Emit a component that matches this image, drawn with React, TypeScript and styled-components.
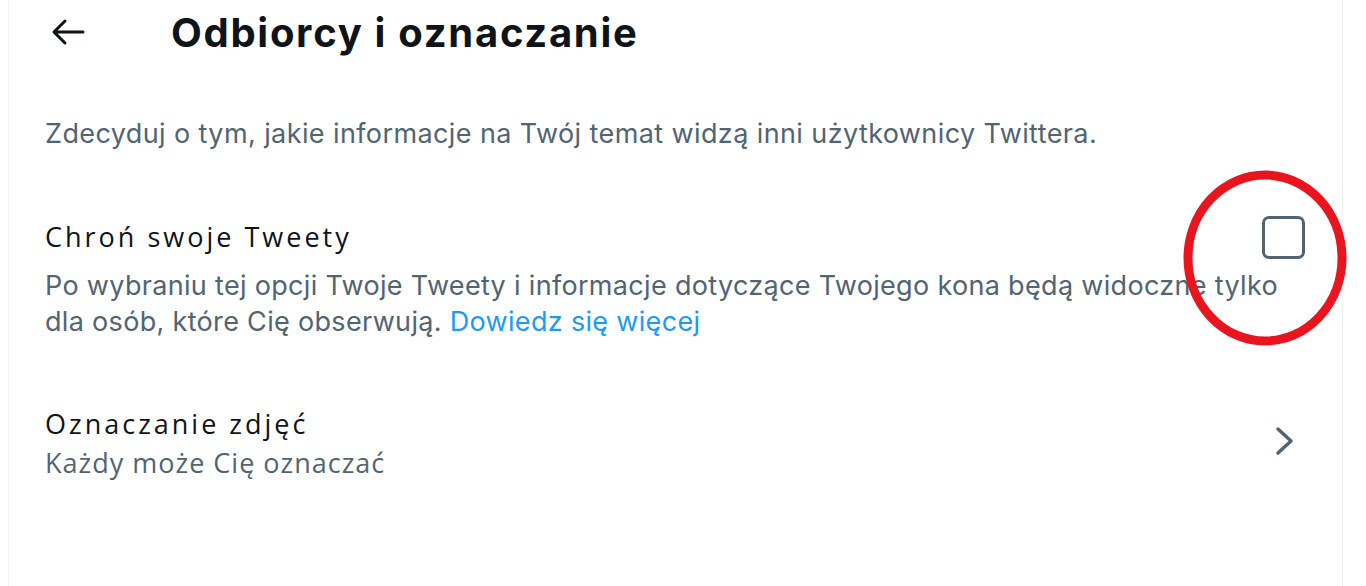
import React from "react";
import styled, { createGlobalStyle } from "styled-components";

const Global = createGlobalStyle`
  html, body { margin: 0; padding: 0; background: #ffffff; }
  body { font-family: Inter, Roboto, "Liberation Sans", sans-serif; }
`;

const Page = styled.div`
  position: relative;
  margin-left: 8px;
  width: 1333px;
  min-height: 586px;
  border-left: 1px solid #eff3f4;
  border-right: 1px solid #eff3f4;
  box-sizing: content-box;
`;

const Header = styled.header`
  display: flex;
  align-items: center;
  height: 64px;
  padding-left: 41px;
`;

const BackButton = styled.button`
  display: flex;
  align-items: center;
  justify-content: center;
  width: 36px;
  height: 36px;
  padding: 0;
  border: none;
  background: transparent;
  color: #0f1419;
  cursor: pointer;
`;

const Title = styled.h1`
  margin: 0 0 0 85px;
  font-family: Inter, Roboto, sans-serif;
  font-size: 40px;
  font-weight: 700;
  letter-spacing: 1.7px;
  color: #0f1419;
`;

const Intro = styled.p`
  margin: 52px 0 0;
  padding: 0 36px;
  font-family: Inter, Roboto, sans-serif;
  font-size: 27px;
  line-height: 36px;
  letter-spacing: 0.4px;
  color: #536471;
`;

const Row = styled.div<{ $top: number }>`
  display: grid;
  grid-template-columns: 1fr auto;
  align-items: start;
  margin-top: ${(p) => p.$top}px;
  padding: 0 37px 0 36px;
`;

const RowLabel = styled.div`
  grid-column: 1;
  grid-row: 1;
  font-family: "Open Sans", "Noto Sans", sans-serif;
  font-size: 27px;
  line-height: 36px;
  letter-spacing: 3px;
  color: #0f1419;
`;

const RowHint = styled.div<{ $gap: number; $alt?: boolean; $full?: boolean }>`
  grid-column: ${(p) => (p.$full ? "1 / -1" : "1")};
  grid-row: 2;
  margin-top: ${(p) => p.$gap}px;
  font-family: ${(p) => (p.$alt ? '"Open Sans", "Noto Sans", sans-serif' : "Inter, Roboto, sans-serif")};
  font-size: 27px;
  line-height: 36px;
  letter-spacing: ${(p) => (p.$alt ? "1px" : "0.32px")};
  white-space: nowrap;
  color: #536471;
`;

const Link = styled.a`
  color: #1d9bf0;
  text-decoration: none;
`;

const Checkbox = styled.span`
  grid-column: 2;
  grid-row: 1;
  display: block;
  width: 37px;
  height: 37px;
  margin: -3px 0 -5px;
  border: 3.5px solid #536471;
  border-radius: 7px;
`;

const Chevron = styled.span`
  grid-column: 2;
  grid-row: 1 / 3;
  display: flex;
  align-items: center;
  margin-top: 20px;
  margin-right: 10px;
  color: #536471;
`;

const Annotation = styled.svg`
  position: absolute;
  left: 1169px;
  top: 166px;
  pointer-events: none;
`;

export default function App() {
  return (
    <>
      <Global />
      <Page>
        <Header>
          <BackButton aria-label="Wstecz">
            <svg width="34" height="28" viewBox="0 0 34 28" fill="none">
              <path
                d="M32 14H3M14 3L3 14l11 11"
                stroke="currentColor"
                strokeWidth="3"
                strokeLinecap="round"
                strokeLinejoin="round"
              />
            </svg>
          </BackButton>
          <Title>Odbiorcy i oznaczanie</Title>
        </Header>
        <Intro>
          Zdecyduj o tym, jakie informacje na Twój temat widzą inni użytkownicy Twittera.
        </Intro>
        <Row $top={67}>
          <RowLabel>Chroń swoje Tweety</RowLabel>
          <Checkbox />
          <RowHint $gap={13} $full>
            Po wybraniu tej opcji Twoje Tweety i informacje dotyczące Twojego kona będą widoczne tylko
            <br />
            dla osób, które Cię obserwują. <Link href="#">Dowiedz się więcej</Link>
          </RowHint>
        </Row>
        <Row $top={66}>
          <RowLabel>Oznaczanie zdjęć</RowLabel>
          <RowHint $gap={3} $alt>
            Każdy może Cię oznaczać
          </RowHint>
          <Chevron>
            <svg width="20" height="30" viewBox="0 0 20 30" fill="none">
              <path
                d="M3 3l13 12L3 27"
                stroke="currentColor"
                strokeWidth="3.5"
                strokeLinecap="round"
                strokeLinejoin="round"
              />
            </svg>
          </Chevron>
        </Row>
        <Annotation width="180" height="185" viewBox="0 0 180 185">
          <ellipse
            cx="87"
            cy="92"
            rx="77"
            ry="83"
            fill="none"
            stroke="#e8141e"
            strokeWidth="9"
          />
        </Annotation>
      </Page>
    </>
  );
}
